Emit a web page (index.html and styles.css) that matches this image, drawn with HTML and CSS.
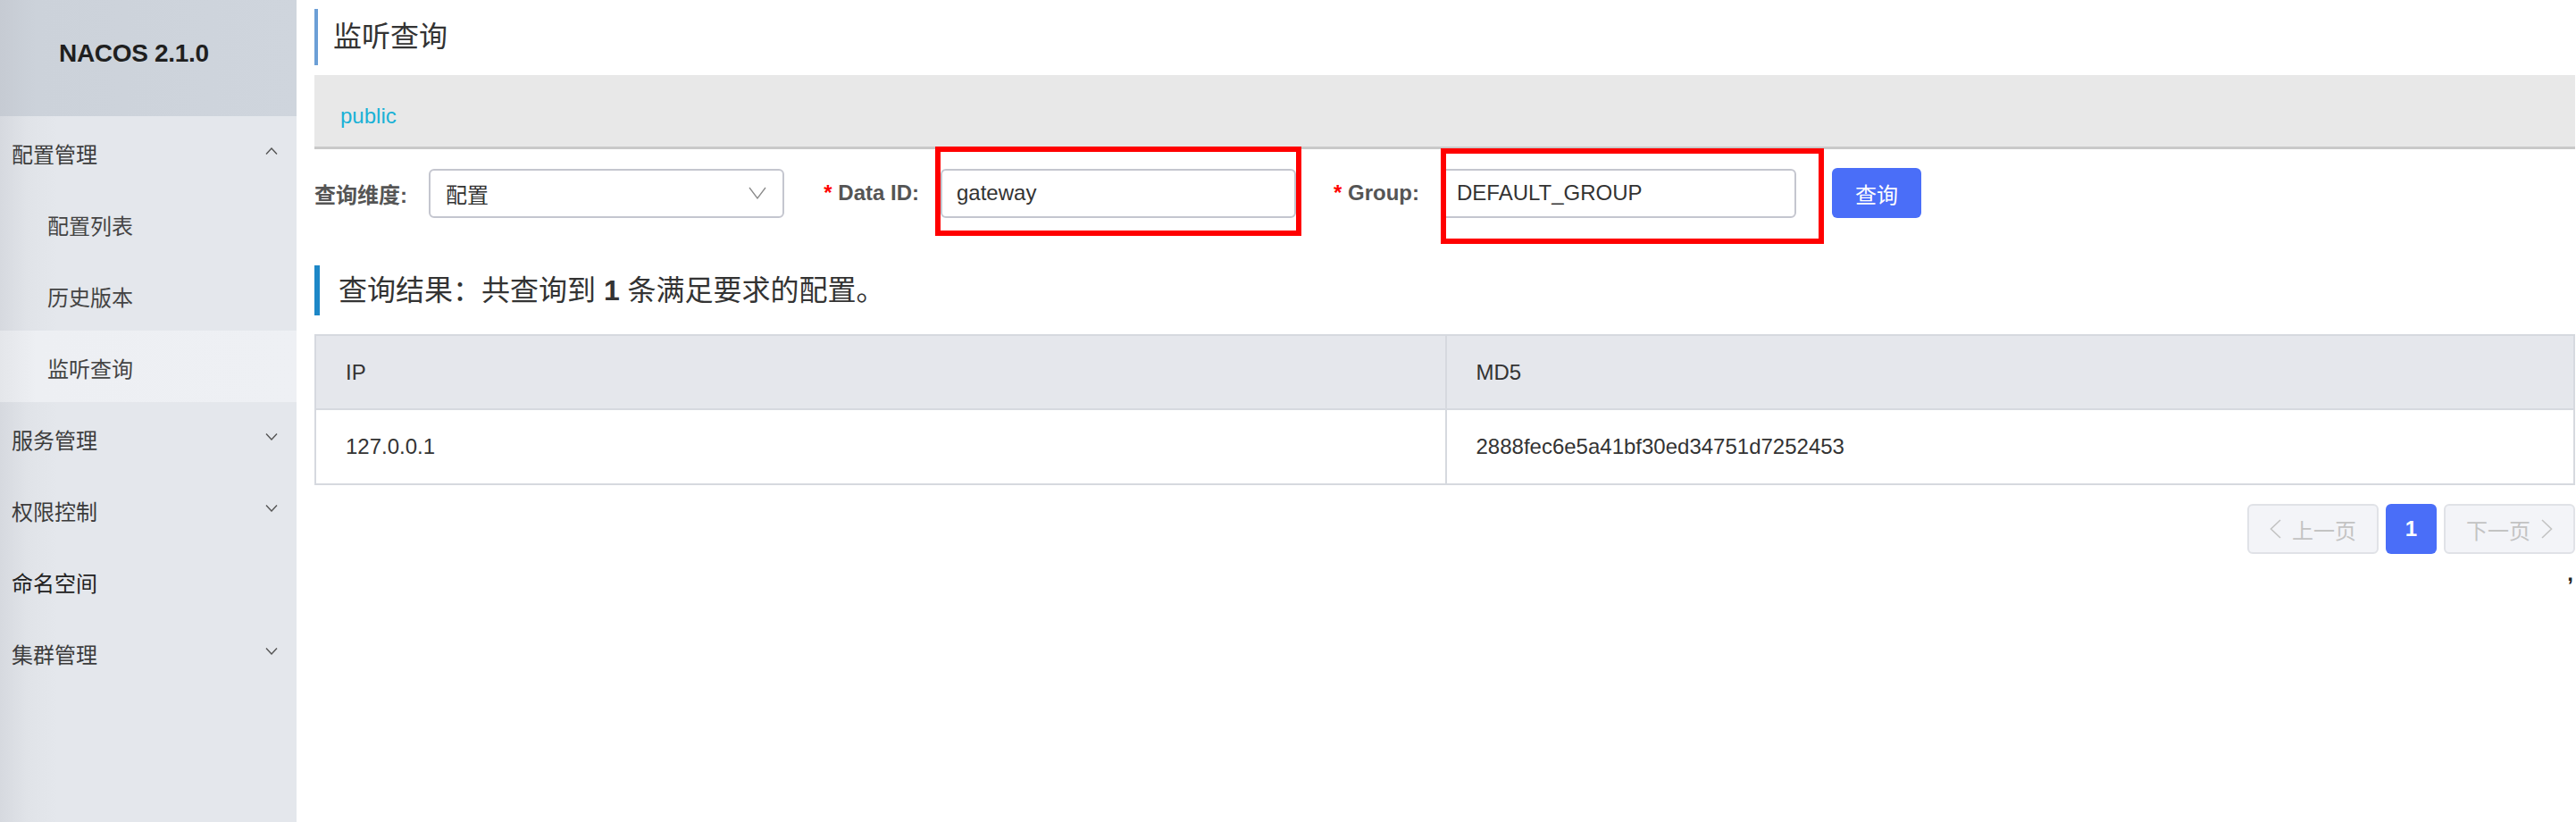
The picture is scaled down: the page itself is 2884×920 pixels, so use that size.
FILE: index.html
```html
<!DOCTYPE html>
<html lang="zh-CN">
<head>
<meta charset="utf-8">
<title>监听查询 - NACOS</title>
<link rel="stylesheet" href="styles.css">
</head>
<body>
<div class="app">
  <aside class="sidebar">
    <div class="brand">NACOS 2.1.0</div>
    <nav class="menu">
      <div class="menu-item group">
        <span>配置管理</span>
        <svg class="chev" viewBox="0 0 14 8" width="14" height="8"><polyline points="1,7.5 7,1 13,7.5" /></svg>
      </div>
      <div class="menu-item sub">配置列表</div>
      <div class="menu-item sub">历史版本</div>
      <div class="menu-item sub active">监听查询</div>
      <div class="menu-item group">
        <span>服务管理</span>
        <svg class="chev" viewBox="0 0 14 8" width="14" height="8"><polyline points="1,0.5 7,7 13,0.5" /></svg>
      </div>
      <div class="menu-item group">
        <span>权限控制</span>
        <svg class="chev" viewBox="0 0 14 8" width="14" height="8"><polyline points="1,0.5 7,7 13,0.5" /></svg>
      </div>
      <div class="menu-item link">命名空间</div>
      <div class="menu-item group">
        <span>集群管理</span>
        <svg class="chev" viewBox="0 0 14 8" width="14" height="8"><polyline points="1,0.5 7,7 13,0.5" /></svg>
      </div>
    </nav>
  </aside>

  <main class="content">
    <h1 class="page-title">监听查询</h1>

    <div class="ns-bar"><span class="ns">public</span></div>

    <form class="query-form">
      <label class="f-label w1">查询维度:</label>
      <div class="select">
        <span>配置</span>
        <svg class="select-arrow" viewBox="0 0 20 14" width="20" height="14"><polyline points="1,1 10,13 19,1" /></svg>
      </div>

      <label class="f-label w2 gap"><i class="req">*</i> Data ID:</label>
      <div class="input-wrap">
        <div class="input">gateway</div>
        <div class="mark mark1"></div>
      </div>

      <label class="f-label w3 gap"><i class="req">*</i> Group:</label>
      <div class="input-wrap">
        <div class="input">DEFAULT_GROUP</div>
        <div class="mark mark2"></div>
      </div>

      <button type="button" class="btn-primary">查询</button>
    </form>

    <h2 class="result-title">查询结果：共查询到 <b>1</b> 条满足要求的配置。</h2>

    <div class="table">
      <div class="th">IP</div>
      <div class="th col2">MD5</div>
      <div class="td">127.0.0.1</div>
      <div class="td col2">2888fec6e5a41bf30ed34751d7252453</div>
    </div>

    <div class="pager">
      <button type="button" class="pg disabled">
        <svg class="pg-arrow" viewBox="0 0 13 22" width="13" height="22"><polyline points="12,1 1.5,11 12,21" /></svg>
        <span>上一页</span>
      </button>
      <button type="button" class="pg current">1</button>
      <button type="button" class="pg disabled">
        <span>下一页</span>
        <svg class="pg-arrow" viewBox="0 0 13 22" width="13" height="22"><polyline points="1,1 11.5,11 1,21" /></svg>
      </button>
    </div>
    <div class="stray">,</div>
  </main>
</div>
</body>
</html>
```

FILE: styles.css
```css
* { box-sizing: border-box; }

html, body {
  margin: 0;
  padding: 0;
  background: #ffffff;
}

body {
  font-family: "Liberation Sans", "Noto Sans CJK SC", sans-serif;
  color: #333333;
  width: 2884px;
  height: 920px;
  overflow: hidden;
}

.app {
  display: flex;
  height: 920px;
}

/* ---------- sidebar ---------- */
.sidebar {
  width: 332px;
  flex: none;
  display: flex;
  flex-direction: column;
  background: linear-gradient(to right, #d6d9df 0px, #e0e3e8 30px, #e4e7ec 64px, #e4e7ec 100%);
}

.brand {
  height: 130px;
  padding-left: 66px;
  line-height: 120px;
  font-size: 28px;
  font-weight: bold;
  color: #1f1f1f;
  background: linear-gradient(to right, #c6cbd3 0px, #ccd2da 40px, #cfd5dd 100%);
  letter-spacing: -0.3px;
}

.menu {
  display: flex;
  flex-direction: column;
}

.menu-item {
  height: 80px;
  display: flex;
  align-items: center;
  justify-content: space-between;
  font-size: 24px;
  color: #3c3c3c;
  padding: 2px 21px 0 13px;
}

.menu-item.sub {
  padding-left: 53px;
  color: #444444;
}

.menu-item.link {
  color: #222222;
}

.menu-item.active {
  background: linear-gradient(to right, #e4e6ea 0px, #edeff3 40px, #eef0f4 100%);
}

.chev {
  fill: none;
  stroke: #555555;
  stroke-width: 1.4;
  margin-top: -4px;
}

/* ---------- content ---------- */
.content {
  flex: 1;
  padding-left: 20px;
  padding-right: 1px;
  display: flex;
  flex-direction: column;
}

.page-title {
  margin: 10px 0 0;
  height: 63px;
  line-height: 63px;
  border-left: 4px solid #6c9fd6;
  padding-left: 17px;
  font-size: 32px;
  font-weight: normal;
  color: #333333;
}

.ns-bar {
  margin-top: 11px;
  height: 83px;
  background: #e8e8e8;
  border-bottom: 3px solid #c9c9c9;
  padding-left: 29px;
  display: flex;
  align-items: center;
}

.ns {
  font-size: 24px;
  color: #19b1d6;
  margin-top: 12px;
}

/* ---------- form ---------- */
.query-form {
  margin: 21px 0 0;
  height: 56px;
  display: flex;
  align-items: center;
}

.f-label {
  font-size: 24px;
  font-weight: bold;
  color: #555555;
  text-align: right;
  padding-right: 24px;
  white-space: nowrap;
  flex: none;
}

.f-label.w1 { width: 128px; text-align: left; }
.f-label.w2 { width: 133px; }
.f-label.w3 { width: 120px; }
.f-label.gap { margin-left: 42px; }

.req {
  font-style: normal;
  color: #ff0000;
  font-weight: bold;
}

.select {
  width: 398px;
  height: 55px;
  border: 2px solid #c4c6cf;
  border-radius: 6px;
  display: flex;
  align-items: center;
  justify-content: space-between;
  padding: 0 18px 0 17px;
  font-size: 24px;
  color: #333333;
  flex: none;
}

.select-arrow {
  fill: none;
  stroke: #8a8a8a;
  stroke-width: 1.3;
}

.input-wrap {
  position: relative;
  flex: none;
}

.input {
  width: 398px;
  height: 55px;
  border: 2px solid #c4c6cf;
  border-radius: 6px;
  display: flex;
  align-items: center;
  padding-left: 16px;
  font-size: 24px;
  color: #333333;
}

.mark {
  position: absolute;
  border: 6px solid #ff0000;
  pointer-events: none;
}

.mark1 {
  left: -6px;
  right: -6px;
  top: -25px;
  bottom: -20px;
}

.mark2 {
  left: 0;
  right: -31px;
  top: -23px;
  bottom: -29px;
}

.btn-primary {
  margin-left: 40px;
  width: 100px;
  height: 56px;
  border: none;
  border-radius: 6px;
  background: #4a6ef8;
  color: #ffffff;
  font-family: inherit;
  font-size: 24px;
  flex: none;
}

/* ---------- result ---------- */
.result-title {
  margin: 53px 0 0;
  height: 56px;
  line-height: 56px;
  border-left: 6px solid #1d87c7;
  padding-left: 21px;
  font-size: 32px;
  font-weight: normal;
  color: #333333;
}

.result-title b {
  font-weight: bold;
}

.table {
  margin-top: 21px;
  border: 2px solid #d6d9df;
  display: grid;
  grid-template-columns: 1fr 1fr;
}

.th, .td {
  display: flex;
  align-items: center;
  padding-left: 33px;
  font-size: 24px;
  color: #333333;
}

.th {
  height: 83px;
  background: #e5e7ec;
  border-bottom: 2px solid #d6d9df;
}

.td {
  height: 82px;
  background: #ffffff;
}

.col2 {
  border-left: 2px solid #d6d9df;
}

/* ---------- pager ---------- */
.pager {
  margin-top: 21px;
  display: flex;
  justify-content: flex-end;
  gap: 8px;
}

.pg {
  height: 56px;
  border-radius: 6px;
  font-family: inherit;
  font-size: 24px;
  display: flex;
  align-items: center;
  justify-content: center;
  gap: 12px;
  padding: 0;
}

.pg.disabled {
  width: 147px;
  background: #f3f4f8;
  border: 2px solid #e0e2e7;
  color: #c3c3c3;
}

.pg.current {
  width: 57px;
  background: #4a6ef8;
  border: none;
  color: #ffffff;
  font-weight: bold;
}

.pg-arrow {
  fill: none;
  stroke: #c3c3c3;
  stroke-width: 1.6;
}

.stray {
  text-align: right;
  font-size: 24px;
  line-height: 24px;
  height: 24px;
  margin-top: 10px;
  padding-right: 2px;
  font-weight: bold;
  color: #222222;
}
```
